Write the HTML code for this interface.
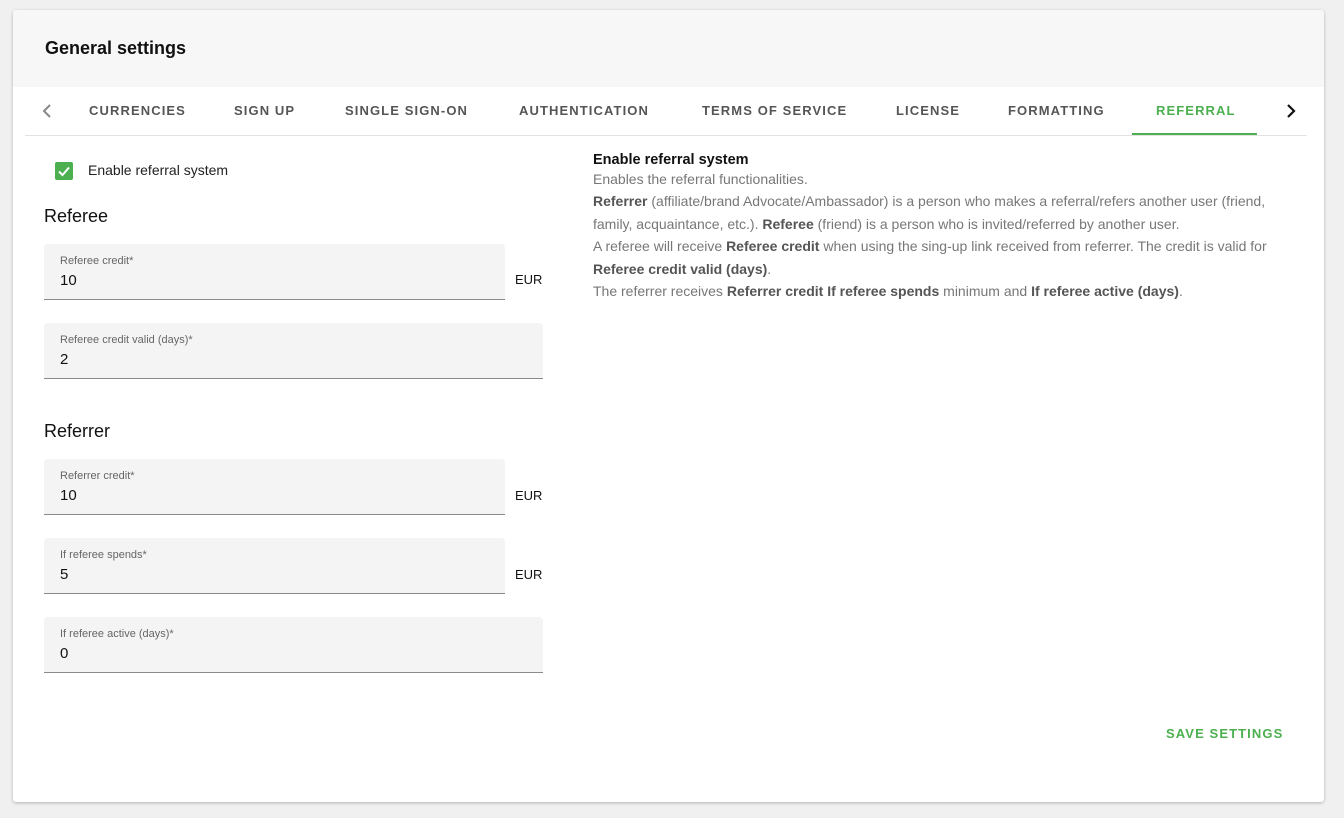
<!DOCTYPE html>
<html><head><style>
*{margin:0;padding:0;box-sizing:border-box}
body{width:1344px;height:818px;background:#f0f0f0;font-family:"Liberation Sans",sans-serif;position:relative;overflow:hidden}
.card{position:absolute;left:13px;top:10px;width:1311px;height:792px;background:#fff;border-radius:3px;box-shadow:0 1px 3px rgba(0,0,0,.25)}
.head{position:absolute;left:0;top:0;width:100%;height:77px;background:#f7f7f7;border-radius:3px 3px 0 0}
.head h1{position:absolute;left:32px;top:28px;font-size:18px;font-weight:bold;color:#111}
.tabs{position:absolute;left:12px;top:77px;width:1282px;height:49px;border-bottom:1px solid #e2e2e2}
.tab{position:absolute;top:16px;font-size:13px;font-weight:bold;letter-spacing:1.1px;color:#555}
.act{color:#4caf50}
.ul{position:absolute;left:1107px;top:46px;width:125px;height:2px;background:#4caf50}
.a{position:absolute}
.field{position:absolute;left:31px;background:#f4f4f4;border-bottom:1px solid #8a8a8a;border-radius:4px 4px 0 0;height:56px}
.field .l{position:absolute;left:16px;top:11px;font-size:11px;color:#666}
.field .v{position:absolute;left:16px;top:28px;font-size:15px;color:#111}
.eur{position:absolute;left:502px;font-size:13px;color:#111}
.sec{position:absolute;left:31px;font-size:18px;color:#111}
.desc{position:absolute;left:580px;top:143px;width:740px;font-size:14px;color:#777;line-height:22.4px;white-space:nowrap}
.desc b{color:#555}
.desc .t{font-size:14.5px;font-weight:bold;color:#111;line-height:15px}
</style></head><body>
<div class="card">
<div class="head"><h1>General settings</h1></div>
<div class="tabs">
<svg class="a" style="left:16px;top:16px" width="12" height="16" viewBox="0 0 12 16"><path d="M9 2 L3 8 L9 14" fill="none" stroke="#888" stroke-width="2"/></svg>
<div class="tab" style="left:64px">CURRENCIES</div>
<div class="tab" style="left:209px">SIGN UP</div>
<div class="tab" style="left:320px">SINGLE SIGN-ON</div>
<div class="tab" style="left:494px">AUTHENTICATION</div>
<div class="tab" style="left:677px">TERMS OF SERVICE</div>
<div class="tab" style="left:871px">LICENSE</div>
<div class="tab" style="left:983px">FORMATTING</div>
<div class="tab act" style="left:1131px">REFERRAL</div>
<div class="ul"></div>
<svg class="a" style="left:1260px;top:16px" width="12" height="16" viewBox="0 0 12 16"><path d="M3 2 L9 8 L3 14" fill="none" stroke="#111" stroke-width="2.2"/></svg>
</div>
<div class="a" style="left:42px;top:152px;width:18px;height:18px;background:#4caf50;border-radius:2px"><svg width="18" height="18" viewBox="0 0 18 18"><path d="M4 9.5 L7.5 13 L14 5.5" fill="none" stroke="#fff" stroke-width="2"/></svg></div>
<div class="a" style="left:75px;top:152px;font-size:14px;color:#222">Enable referral system</div>
<div class="sec" style="top:196px">Referee</div>
<div class="field" style="top:234px;width:461px"><div class="l">Referee credit*</div><div class="v">10</div></div>
<div class="eur" style="top:262px">EUR</div>
<div class="field" style="top:313px;width:499px"><div class="l">Referee credit valid (days)*</div><div class="v">2</div></div>
<div class="sec" style="top:411px">Referrer</div>
<div class="field" style="top:449px;width:461px"><div class="l">Referrer credit*</div><div class="v">10</div></div>
<div class="eur" style="top:478px">EUR</div>
<div class="field" style="top:528px;width:461px"><div class="l">If referee spends*</div><div class="v">5</div></div>
<div class="eur" style="top:557px">EUR</div>
<div class="field" style="top:607px;width:499px"><div class="l">If referee active (days)*</div><div class="v">0</div></div>
<div class="desc"><div class="t">Enable referral system</div>
Enables the referral functionalities.<br>
<b>Referrer</b> (affiliate/brand Advocate/Ambassador) is a person who makes a referral/refers another user (friend,<br>family, acquaintance, etc.). <b>Referee</b> (friend) is a person who is invited/referred by another user.<br>
A referee will receive <b>Referee credit</b> when using the sing-up link received from referrer. The credit is valid for<br><b>Referee credit valid (days)</b>.<br>
The referrer receives <b>Referrer credit If referee spends</b> minimum and <b>If referee active (days)</b>.</div>
<div class="a" style="left:1153px;top:716px;font-size:13px;font-weight:bold;letter-spacing:1.1px;color:#4caf50">SAVE SETTINGS</div>
</div>
</body></html>
